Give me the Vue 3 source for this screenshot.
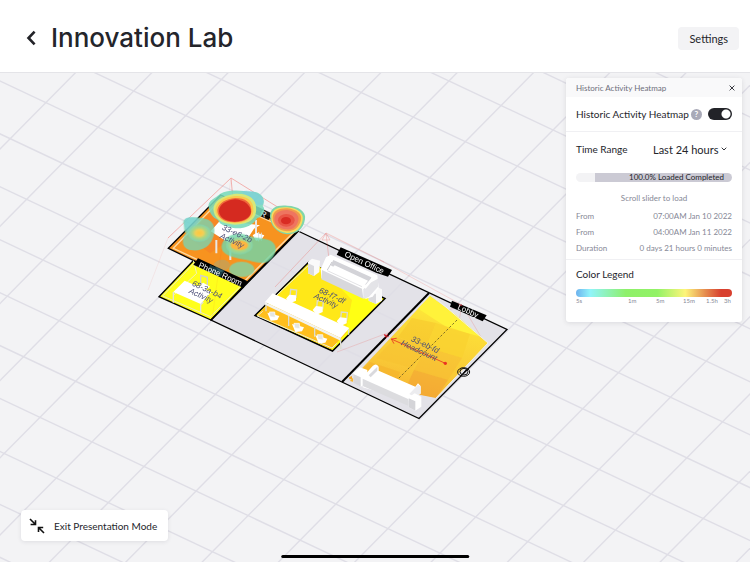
<script setup>
import { ref } from 'vue'

const heatmapOn = ref(true)
const range = ref('Last 24 hours')

const details = [
  { term: 'From', value: '07:00AM Jan 10 2022' },
  { term: 'From', value: '04:00AM Jan 11 2022' },
  { term: 'Duration', value: '0 days 21 hours 0 minutes' },
]
const ticks = ['5s', '1m', '5m', '15m', '1.5h', '3h']

// Floor lattice: one shared vertex and the two edge vectors of a tile.
const origin = [150, 151.7]
const u = [52.05, 24.55]
const v = [-35.7, 36.1]
const line = (start, dir) => ({
  x1: start[0] - dir[0] * 22,
  y1: start[1] - dir[1] * 22,
  x2: start[0] + dir[0] * 22,
  y2: start[1] + dir[1] * 22,
})
const gridLines = []
for (let i = -12; i <= 20; i++) {
  gridLines.push(line([origin[0] + v[0] * i, origin[1] + v[1] * i], u))
  gridLines.push(line([origin[0] + u[0] * i, origin[1] + u[1] * i], v))
}
</script>

<template>
  <div class="app">
    <header class="topbar">
      <button class="back" type="button" aria-label="Back">
        <svg width="10" height="16" viewBox="0 0 10 16"><path d="M8.600 1.600 2.500 8l6.100 6.400" /></svg>
      </button>
      <h1>Innovation Lab</h1>
      <button class="settings" type="button">Settings</button>
    </header>

    <main class="stage">
      <svg class="scene" viewBox="0 73 750 489" preserveAspectRatio="xMidYMid slice" role="img" aria-label="Floor plan">
        <defs>
          <linearGradient id="lobbyFill" x1="0.7" y1="0" x2="0.35" y2="1">
            <stop offset="0" stop-color="#fff338" />
            <stop offset="0.3" stop-color="#fcdc38" />
            <stop offset="0.7" stop-color="#f9c836" />
            <stop offset="1" stop-color="#f6b032" />
          </linearGradient>
          <radialGradient id="warm">
            <stop offset="0" stop-color="#ffc83c" />
            <stop offset="0.35" stop-color="#f3cf57" />
            <stop offset="0.6" stop-color="#b5d77d" stop-opacity="0.9" />
            <stop offset="1" stop-color="#7fd6b4" stop-opacity="0.75" />
          </radialGradient>
          <clipPath id="lobbyClip"><path d="M430 296 456 315 488 343 436 398 350 381Z" /></clipPath>
        </defs>

        <g stroke="#dfdee6" stroke-width="1.4">
          <line v-for="(l, i) in gridLines" :key="i" v-bind="l" />
        </g>

        <!-- corridor floor -->
        <path d="M298 231 507 329.5 419 418.5 211 320Z" fill="#dfdee5" fill-opacity="0.85" stroke="#000" stroke-width="1.3" />

        <!-- meeting room and phone room, in thirds of a unit -->
        <g transform="translate(150 170) scale(0.33333)">
          <path d="M55 235 212 75 443 182 283 345Z" fill="#f7931f" stroke="#f3f3f5" stroke-width="12" />
          <path d="M55 235 212 75 443 182 283 345Z" fill="#f7931f" stroke="#000" stroke-width="4" />
          <path d="M70 235 213 88 432 186 283 334Z" fill="none" stroke="#fbd9a4" stroke-width="4" />
          <path d="M112 200 190 118 270 190 180 250Z" fill="#f47b2b" opacity="0.45" />
          <path d="M27 380 130 272 283 345 183 450Z" fill="#ffff1c" stroke="#000" stroke-width="4" />
          <path d="M38 378 130 282 272 348 182 440Z" fill="none" stroke="#ececbf" stroke-width="3" />
          <path d="M183 450 446 182" stroke="#000" stroke-width="5" />
          <path d="M130 272 140 310 70 376" fill="none" stroke="#f1f1b8" stroke-width="3" />

          <!-- furniture -->
          <path d="M182 184 212 150 330 166 312 176 270 240Z" fill="#fff" />
          <path d="M199 210V250M241 226V270M318 150V202" stroke="#e9e6e4" stroke-width="6" />
          <path d="M308 196 320 188 343 196 335 208 318 212Z" fill="#fff" />
          <path d="M326 186V214M334 188V212" stroke="#ddd" stroke-width="3" />
          <path d="M152 316 172 322V348L152 340Z" fill="none" stroke="#cfcfcf" stroke-width="4" />
          <path d="M142 350 160 338 180 350 164 362Z" fill="#fff" />
          <path d="M70 366 104 332 184 366 152 402Z" fill="#fff" />
          <path d="M70 366V398M152 402V430M152 404 160 396" fill="none" stroke="#e2e2dc" stroke-width="4" />

          <g transform="translate(318 108) rotate(25)">
            <rect width="52" height="22" fill="#000" opacity="0.9" />
            <text x="22" y="20" class="room-big">R</text>
          </g>
        </g>

        <!-- sensor cones -->
        <g fill="none" stroke="#f03a30" stroke-width="0.6" opacity="0.4">
          <path d="M231 178 168 238M231 178 233 200M231 178 292 216" stroke-width="0.9" />
          <path d="M326 233 275 287M326 233 337 330M326 233 384 262" />
          <path d="M326 233 322 240H330Z" />
          <path d="M462 305 337 352M462 305 450 368M462 305 484 342M380 260 462 305" opacity="0.7" />
          <path d="M231 178 212 320M168 238 148 290" opacity="0.3" />
        </g>

        <g transform="translate(150 170) scale(0.33333)">
          <!-- heat blobs -->
          <path d="M100 160C96 138 140 140 165 146 190 150 200 176 188 205 180 232 150 246 122 240 94 236 94 206 108 190 100 184 104 170 100 160Z" fill="#79d5b2" opacity="0.8" />
          <path d="M103 155C103 137 136 140 150 150L114 188C106 180 102 168 103 155Z" fill="#76d2df" opacity="0.55" />
          <ellipse cx="148" cy="189" rx="34" ry="26" fill="url(#warm)" />
          <path d="M216 222C226 196 262 184 290 196 310 204 342 202 362 212 388 226 378 262 352 276 330 284 300 270 280 268 246 262 208 254 216 222Z" fill="#72d5a8" opacity="0.82" />
          <ellipse cx="268" cy="226" rx="40" ry="27" fill="url(#warm)" />
          <ellipse cx="268" cy="226" rx="26" ry="14" fill="#fdb640" />
          <ellipse cx="275" cy="298" rx="38" ry="23" fill="#8bcf9b" opacity="0.88" />
          <path d="M176 112C172 92 194 86 210 72 236 56 280 62 302 66 330 62 350 86 338 108 350 120 336 142 322 144 304 176 260 180 238 170 218 168 208 160 204 150 186 142 180 130 176 112Z" fill="#77d9ba" opacity="0.88" />
          <path d="M272 64C310 56 346 76 340 100 334 108 322 108 314 98Z" fill="#7bcde0" opacity="0.6" />
          <path d="M190 118C192 92 216 78 252 72 292 68 318 86 318 112 322 142 302 164 254 164 214 162 192 146 190 118Z" fill="#d8e878" />
          <path d="M196 118C198 96 222 82 254 78 290 76 310 92 310 116 314 142 292 160 254 160 222 158 196 144 196 118Z" fill="#fbc94d" />
          <path d="M202 120C206 98 228 86 256 84 286 84 304 98 304 120 306 142 288 156 254 157 222 156 202 144 202 120Z" fill="#f06a3c" />
          <path d="M207 124C206 104 230 91 254 88 282 89 302 106 303 124 303 142 284 154 254 155 224 154 208 142 207 124Z" fill="#d52a20" />
          <path d="M360 138C360 112 382 104 412 107 444 108 470 124 465 148 460 178 440 194 410 193 378 188 360 164 360 138Z" fill="#80d6a9" />
          <path d="M364 142C364 118 384 110 412 112 442 114 463 130 458 150 454 176 436 190 410 189 382 186 364 166 364 142Z" fill="#f9dc5c" />
          <path d="M368 144C368 122 388 114 412 115 440 118 457 132 453 150 448 172 432 184 410 184 386 182 368 166 368 144Z" fill="#f19a4c" />
          <path d="M373 147C374 128 390 120 411 120 434 122 450 136 445 152 440 170 428 180 408 178 388 176 373 164 373 147Z" fill="#ee7560" />
          <ellipse cx="409" cy="151" rx="25" ry="19" fill="#e95545" />
          <ellipse cx="408" cy="152" rx="15" ry="11" fill="#d92c23" />

          <!-- phone room tag -->
          <path d="M144 265 292 333 279 353 130 284Z" fill="#000" />
          <path d="M180 284 222 304 212 320 176 303Z" fill="#2f7585" opacity="0.5" />
          <path d="M190 284C200 264 234 264 240 284 238 296 224 304 210 306Z" fill="#6fb9b8" opacity="0.3" />
        </g>

        <!-- open office -->
        <path d="M308.500 262.500 385 298.500 332.500 351 255 315.500Z" fill="#ffff14" stroke="#000" stroke-width="1.500" />
        <path d="M308.500 264 318 265 352 300 346 330 331 349 257 315.500Z" fill="#ffe818" />
        <path d="M268 304 347 332 331 349 257 315Z" fill="#ffbf1e" />
        <g transform="translate(240 220) scale(0.33333)">
          <g stroke="#ececd8" stroke-width="3" fill="none">
            <path d="M68 274 52 288 276 384 290 370" />
            <path d="M208 134 110 226" />
          </g>
          <!-- chairs behind the table -->
          <g v-for="(c, i) in [[138, 206], [218, 240], [290, 274]]" :key="'b' + i" :transform="`translate(${c[0]} ${c[1]})`">
            <path d="M12 24 14 2 32 4 30 28" fill="none" stroke="#dcdccf" stroke-width="4" />
            <path d="M0 30 10 18 30 20 30 36 12 44Z" fill="#fff" />
          </g>
          <path d="M75 246 98 220 328 324 302 354Z" fill="#fff" />
          <path d="M75 246 302 354V362L75 254Z" fill="#f3f3ef" />
          <path d="M78 254V274M146 288V318M224 322V350M302 356V388M326 328V344" stroke="#dcdcd0" stroke-width="4" />
          <!-- chairs in front -->
          <g v-for="(c, i) in [[82, 274], [156, 308], [226, 342]]" :key="'f' + i" :transform="`translate(${c[0]} ${c[1]})`">
            <path d="M0 4 36 14 30 26 10 28Z" fill="#fff" />
            <path d="M6 2 8 16 24 18 22 2Z" fill="#e5e5df" stroke="#fff" stroke-width="2" />
          </g>
          <!-- end tables -->
          <path d="M204 126 216 116 240 122 238 156 222 168 204 160Z" fill="#fafafa" />
          <path d="M204 130 222 138V168L204 160Z" fill="#dadadd" />
          <path d="M386 208 400 196 426 208V242L408 252 386 242Z" fill="#fafafa" />
          <path d="M386 212 408 222V252L386 242Z" fill="#dadadd" />
          <!-- sofa -->
          <path d="M242 148 258 112 272 104 412 166 416 204 398 230 378 236 244 174Z" fill="#fff" />
          <path d="M246 150 366 206 370 236 244 178Z" fill="#d8d8dc" />
          <path d="M272 136 280 120 394 172 392 186 380 196Z" fill="#d3d3d8" />
          <path d="M276 144 284 136 384 182 374 196 268 154Z" fill="#fff" />
          <path d="M248 148 276 116" stroke="#fff" stroke-width="8" />
          <path d="M276 126 262 150" stroke="#c9c9cf" stroke-width="3" />
          <path d="M262 152 366 200" stroke="#d3d3d8" stroke-width="2" />
          <path d="M370 208 388 190 414 176V200L386 232 370 236Z" fill="#e4e4e8" />
          <path d="M374 204 404 168" stroke="#fff" stroke-width="8" />
          <path d="M302 82 456 150 444 170 408 158 290 104Z" fill="#000" />
        </g>

        <!-- lobby -->
        <path d="M429 293 342 382" stroke="#000" stroke-width="2" />
        <path d="M430 296 456 315 488 343 436 398 350 381Z" fill="url(#lobbyFill)" />
        <g clip-path="url(#lobbyClip)">
          <path d="M430 296 456 315 482 337 448 328 417 308Z" fill="#fff23a" />
          <path d="M412 318 436 323 426 347 398 337Z" fill="#f5c52c" opacity="0.55" />
          <path d="M436 323 470 334 462 358 426 347Z" fill="#fad22f" opacity="0.7" />
          <path d="M396 337 426 347 412 368 376 358Z" fill="#f7c132" opacity="0.6" />
          <path d="M426 347 462 358 448 380 414 370Z" fill="#f6b833" opacity="0.45" />
          <path d="M370 362 400 372 392 398 350 381Z" fill="#f5b32c" opacity="0.7" />
          <path d="M414 370 448 380 436 398 404 392Z" fill="#f29d34" opacity="0.5" />
        </g>
        <path d="M433 296 488 343 436 398" fill="none" stroke="#efefe5" stroke-width="1" />
        <path d="M457 320 398 379" stroke="#65551f" stroke-width="0.8" stroke-dasharray="2.400 1.800" />
        <g transform="translate(330 280) scale(0.33333)">
          <path d="M184 177 346 250" stroke="#ea3323" stroke-width="2.500" />
          <path d="M200 175 184 177 192 191" fill="none" stroke="#ea3323" stroke-width="2.500" />
          <circle cx="346" cy="250" r="5" fill="#ea3323" />
          <path d="M162 165 176 170M164 172 174 162M164 162 170 174" stroke="#cf2730" stroke-width="3" />
          <path d="M70 278 90 262 112 270V310L92 320 70 306Z" fill="#fff" />
          <path d="M70 282 92 292V320L70 308Z" fill="#d7d7da" />
          <path d="M57 292 66 288 66 298 58 298Z" fill="#f5a623" />
          <path d="M98 292 128 258Q138 248 146 260V272L256 320 264 310 272 318V340L240 364 98 322Z" fill="#fff" />
          <path d="M98 296 236 358V378L98 318Z" fill="#dcdcdf" />
          <path d="M116 286 142 260V272L122 292Z" fill="#d9d9dd" />
          <path d="M238 342 264 314 272 320V342L252 350Z" fill="#ececef" />
          <path d="M236 352 254 340 274 350V380L256 392 236 382Z" fill="#fff" />
          <path d="M236 355 256 364V392L236 382Z" fill="#d4d4d8" />
          <g fill="none" stroke="#111" stroke-width="3">
            <ellipse cx="401" cy="276" rx="18" ry="13" />
            <ellipse cx="402" cy="275" rx="12" ry="10" />
            <path d="M396 284 410 267" />
          </g>
          <path d="M366 62 470 106 458 124 360 80Z" fill="#000" />
          <path d="M386 73 397 78M394 72 387 80" stroke="#cf2730" stroke-width="2" />
        </g>

        <g class="room">
          <text transform="translate(198 267) rotate(24)">Phone Room</text>
          <text transform="translate(344 256) rotate(25)">Open Office</text>
          <text transform="translate(457 309) rotate(24)">Lobby</text>
        </g>
        <g class="sensor">
          <text transform="translate(236 236) rotate(25)">33-e6-2b</text>
          <text transform="translate(231 243) rotate(25)">Activity</text>
          <text transform="translate(206 292) rotate(25)">68-3a-b4</text>
          <text transform="translate(200 298) rotate(25)">Activity</text>
          <text transform="translate(331 298) rotate(25)">68-f7-df</text>
          <text transform="translate(325 303) rotate(25)">Activity</text>
          <text transform="translate(424 347) rotate(25)">33-eb-fd</text>
          <text transform="translate(418 353) rotate(25)">Headcount</text>
        </g>
      </svg>

      <aside class="panel">
        <div class="panel-head">
          <span>Historic Activity Heatmap</span>
          <button type="button" aria-label="Close">
            <svg width="6" height="6" viewBox="0 0 6 6"><path d="M.6.6l4.800 4.800M5.400.6.6 5.400" /></svg>
          </button>
        </div>

        <div class="row toggle-row">
          <label for="heatmap">Historic Activity Heatmap</label>
          <span class="help">?</span>
          <input id="heatmap" v-model="heatmapOn" class="switch" type="checkbox" />
        </div>

        <section class="range">
          <div class="row range-row">
            <label for="range">Time Range</label>
            <span class="select">
              <select id="range" v-model="range">
                <option>Last 24 hours</option>
              </select>
              <svg width="6" height="4" viewBox="0 0 6 4"><path d="M.7.7 3 3 5.300.7" /></svg>
            </span>
          </div>
          <div class="loader" role="progressbar" aria-valuenow="100" aria-label="Loaded">
            <span>100.0% Loaded Completed</span>
          </div>
          <p class="hint">Scroll slider to load</p>
          <dl>
            <div v-for="(d, i) in details" :key="i">
              <dt>{{ d.term }}</dt>
              <dd>{{ d.value }}</dd>
            </div>
          </dl>
        </section>

        <section class="legend">
          <h2>Color Legend</h2>
          <div class="ramp"></div>
          <div class="ticks">
            <span v-for="t in ticks" :key="t">{{ t }}</span>
          </div>
        </section>
      </aside>

      <button class="exit" type="button">
        <svg width="16" height="16" viewBox="0 0 16 16">
          <path d="M1 1l5.500 5.500M6.500 2.200V6.500H1.600M15 15 9.500 9.500M9.500 14V9.500H14.200" />
        </svg>
        <span>Exit Presentation Mode</span>
      </button>
      <div class="home"></div>
    </main>
  </div>
</template>

<style>
body {
  margin: 0;
}
</style>

<style scoped>
.app {
  display: flex;
  flex-direction: column;
  min-height: 100vh;
  font-family: Lato, "Liberation Sans", sans-serif;
  color: #24252b;
  background: #f3f3f5;
}
button,
select {
  font: inherit;
  color: inherit;
  border: 0;
  padding: 0;
  background: none;
}
.topbar {
  display: flex;
  align-items: center;
  gap: 15px;
  box-sizing: border-box;
  min-height: 73px;
  padding: 4px 11px 0 26px;
  background: #fff;
  border-bottom: 1px solid #e4e4e8;
}
.back {
  display: flex;
}
.back svg {
  fill: none;
  stroke: #222328;
  stroke-width: 2.6;
}
h1 {
  flex: 1;
  margin: 0;
  font-family: Inter, sans-serif;
  font-size: 26px;
  line-height: 30px;
  font-weight: 500;
}
.settings {
  padding: 0 11px;
  line-height: 23px;
  font-size: 11px;
  border-radius: 4px;
  background: #f3f3f5;
}
.stage {
  position: relative;
  flex: 1;
  display: flex;
  flex-direction: column;
  justify-content: space-between;
  gap: 24px;
  padding: 5px 8px 21px 21px;
  overflow: hidden;
}
.scene {
  position: absolute;
  inset: 0;
  width: 100%;
  height: 100%;
}
.room {
  font: 8px "Liberation Sans", sans-serif;
  fill: #fff;
}
.room-big {
  font: 24px "Liberation Sans", sans-serif;
  fill: #fff;
}
.sensor {
  font: italic 8px "Liberation Sans", sans-serif;
  fill: #4d4f78;
  text-anchor: middle;
}
.panel {
  position: relative;
  align-self: flex-end;
  width: 176px;
  border-radius: 3px;
  background: #fff;
  box-shadow: 0 1px 5px rgba(40, 40, 60, 0.12);
  overflow: hidden;
}
.panel-head {
  display: flex;
  align-items: center;
  justify-content: space-between;
  height: 19px;
  padding: 0 7px 0 10px;
  background: #f9f9fa;
  font-size: 8px;
  color: #6d6f7b;
}
.panel-head button {
  display: flex;
}
.panel-head svg {
  fill: none;
  stroke: #3a3b42;
  stroke-width: 1;
}
.row {
  display: flex;
  align-items: center;
}
.toggle-row {
  height: 34px;
  padding: 0 10px;
  gap: 2px;
  border-bottom: 1px solid #f0f0f3;
}
.toggle-row label {
  white-space: nowrap;
  font-size: 10px;
}
.help {
  width: 11px;
  flex: none;
  border-radius: 50%;
  background: #a9aab8;
  color: #fff;
  font-size: 8px;
  font-weight: 700;
  line-height: 11px;
  text-align: center;
}
.switch {
  appearance: none;
  flex: none;
  width: 24px;
  height: 12px;
  margin: 0 0 0 auto;
  border-radius: 6px;
  background: radial-gradient(circle at 6px 6px, #fff 4px, #a9aab8 5px);
}
.switch:checked {
  background: radial-gradient(circle at 18px 6px, #fff 4px, #222328 5px);
}
.range {
  padding: 0 10px 3px;
  border-bottom: 1px solid #f0f0f3;
}
.range-row {
  height: 34px;
  justify-content: space-between;
  font-size: 10px;
}
.select {
  display: flex;
  align-items: center;
  gap: 2px;
  padding-right: 5px;
}
.select select {
  appearance: none;
  font-size: 11px;
}
.select svg {
  fill: none;
  stroke: #33343a;
}
.loader {
  display: flex;
  align-items: center;
  justify-content: flex-end;
  height: 9px;
  margin-top: 7px;
  padding-right: 8px;
  border-radius: 5px;
  background: linear-gradient(90deg, #f3f3f5 0 12.5%, #cbcad4 12.5%);
  font-size: 8px;
  line-height: 9px;
}
.hint {
  margin: 11px 0 5px;
  font-size: 8px;
  line-height: 10px;
  text-align: center;
  color: #868896;
}
dl {
  margin: 0;
  font-size: 8px;
  line-height: 16px;
  color: #868896;
}
dl div {
  display: flex;
  justify-content: space-between;
}
dd {
  margin: 0;
}
.legend {
  padding: 7px 10px 17px;
}
h2 {
  margin: 0 0 8px;
  font-size: 10px;
  line-height: 14px;
  font-weight: 400;
}
.ramp {
  height: 8px;
  border-radius: 4px;
  background: linear-gradient(90deg, #6db2ee 0%, #90f4fa 9%, #8ef06a 32%, #92f266 52%, #fdf57a 70%, #e58b4e 83%, #d8402f 93%, #d8402f 100%);
}
.ticks {
  display: grid;
  grid-template-columns: 52fr 28fr 27fr 23fr 18fr 8fr;
  font-size: 6px;
  line-height: 8px;
  color: #868896;
}
.ticks span {
  min-width: 0;
  white-space: nowrap;
}
.exit {
  position: relative;
  align-self: flex-start;
  display: flex;
  align-items: center;
  gap: 9px;
  height: 31px;
  padding: 0 11px 0 8px;
  border-radius: 4px;
  background: #fff;
  box-shadow: 0 1px 4px rgba(40, 40, 60, 0.1);
  font-size: 10px;
}
.exit svg {
  fill: none;
  stroke: #111;
  stroke-width: 1.6;
}
.home {
  position: absolute;
  left: 50%;
  bottom: 4px;
  width: 25%;
  height: 3px;
  border-radius: 2px;
  background: #000;
  transform: translateX(-50%);
}
</style>
